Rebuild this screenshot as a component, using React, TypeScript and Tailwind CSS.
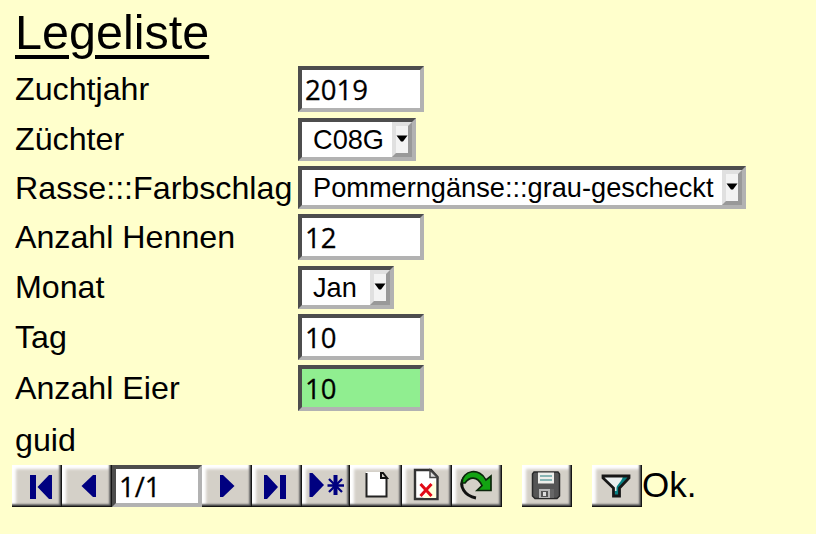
import type { ReactNode } from "react";

const sunken = "border-4 border-t-[#4d4d4d] border-l-[#4d4d4d] border-r-[#b2b2b2] border-b-[#b2b2b2]";
const digits = "font-['Open_Sans','Noto_Sans',sans-serif] text-[27.5px] leading-none [-webkit-text-stroke:0.3px_#000]";

function Row({ label, className, children }: { label: string; className: string; children?: ReactNode }) {
  return (
    <div className={`flex items-center ${className}`}>
      <div className="w-[283px] shrink-0 whitespace-nowrap text-[32.2px] leading-[40px]">{label}</div>
      {children}
    </div>
  );
}

function Field({ value, bg = "bg-white" }: { value: string; bg?: string }) {
  return (
    <div className={`flex h-[46px] w-[126px] items-center pl-[3px] pt-[2px] ${sunken} ${bg} ${digits}`}>{value}</div>
  );
}

function Select({ value, width }: { value: string; width: string }) {
  return (
    <div className={`flex h-[43px] bg-white ${sunken} ${width}`}>
      <div className="flex grow items-center whitespace-nowrap pl-[11px] pt-[1px] text-[27.2px] leading-none">{value}</div>
      <div className="flex w-5 shrink-0 justify-center border-4 border-t-[#e0e0e0] border-l-[#e0e0e0] border-r-[#999999] border-b-[#999999] bg-[#f3f3f3] pt-[9px]">
        <svg width="12" height="8" viewBox="0 0 12 8">
          <path d="M0.5 0.5h11L7 6.5H5z" fill="#000" />
        </svg>
      </div>
    </div>
  );
}

function Tool({ children, className = "w-[50px]" }: { children: ReactNode; className?: string }) {
  return (
    <div
      className={`flex h-[42px] shrink-0 items-center justify-center bg-[#d4d0c8] shadow-[inset_-1px_-1px_1px_#111,inset_-2px_-2px_2px_#444,inset_-3px_-3px_2px_#888,inset_4px_4px_3px_#fff] ${className}`}
    >
      <svg width="50" height="42" viewBox="0 0 50 42" className="shrink-0">
        {children}
      </svg>
    </div>
  );
}

export default function App() {
  return (
    <div className="h-[534px] w-[816px] overflow-hidden bg-[#ffffcc] pl-[15px] font-['Liberation_Sans',Arial,sans-serif] text-black">
      <h1 className="h-[66px] pt-[4px] text-[48.5px] leading-[56px] underline decoration-[4px] underline-offset-[6px]">Legeliste</h1>
      <Row label="Zuchtjahr" className="h-[46px]"><Field value="2019" /></Row>
      <Row label="Züchter" className="mt-[5px] h-[44px] [&>div:last-child]:mt-px"><Select value="C08G" width="w-[118px]" /></Row>
      <Row label="Rasse:::Farbschlag" className="mt-[5px] h-[43px]"><Select value="Pommerngänse:::grau-gescheckt" width="w-[448px]" /></Row>
      <Row label="Anzahl Hennen" className="mt-[5px] h-[46px]"><Field value="12" /></Row>
      <Row label="Monat" className="mt-[5px] h-[44px] [&>div:last-child]:mt-px"><Select value="Jan" width="w-[96px]" /></Row>
      <Row label="Tag" className="mt-[5px] h-[46px]"><Field value="10" /></Row>
      <Row label="Anzahl Eier" className="mt-[5px] h-[46px]"><Field value="10" bg="bg-[#90ee90]" /></Row>
      <Row label="guid" className="mt-[9px] h-[40px]" />

      <div className="-ml-[3px] mt-[5px] flex h-[42px] items-center">
        <Tool>
          <path d="M18 10h6v24h-6zM40 10v24h-3L25.500 22 37 10z" fill="#000080" />
        </Tool>
        <Tool>
          <path d="M34 10v22h-3L19.500 21 31 10z" fill="#000080" />
        </Tool>
        <div className={`flex h-[42px] w-[90px] shrink-0 items-center bg-white pl-[3px] pt-[2px] ${sunken} ${digits}`}>1/1</div>
        <Tool>
          <path d="M18 10h3l11.500 11L21 32h-3z" fill="#000080" />
        </Tool>
        <Tool>
          <path d="M12 10h3l11 12-11 12h-3zM28 10h6v24h-6z" fill="#000080" />
        </Tool>
        <Tool className="w-[48px]">
          <path d="M8.500 8h3l11.500 12-11.500 12h-3z" fill="#000080" />
          <path d="M34.500 10v20" stroke="#000080" strokeWidth="4" />
          <path d="M26.500 20.500h16.500M28 14l13 13M41 14L28 27" stroke="#000080" strokeWidth="2.300" />
        </Tool>
        <Tool className="w-[52px]">
          <path d="M15 7h15l6 6v18H15z" fill="#fff" />
          <path d="M15.500 8v23.500h20V13" fill="none" stroke="#222" strokeWidth="2" />
          <path d="M30 8h2l4 5h-6z" fill="#d4d0c8" stroke="#111" strokeWidth="2" />
        </Tool>
        <Tool>
          <path d="M13 5h16l6.500 7v22H13z" fill="#fff" stroke="#333" strokeWidth="2.400" />
          <path d="M33 15l1 8v10H21z" fill="#ffffdc" />
          <path d="M28 5v7.500h7.500z" fill="#ddd" stroke="#444" strokeWidth="1.500" />
          <path d="M18.500 19l11 12M29.500 19L18.500 31" stroke="#e20a16" strokeWidth="3" />
        </Tool>
        <Tool>
          <path d="M24 33C13 31 6 21 12 13" fill="none" stroke="#111" strokeWidth="3" />
          <path d="M10 18C10 5 28 2 34 15l5-4v14.500H25l5-5C25 10 17 12 13 18z" fill="#12a312" stroke="#0b260b" strokeWidth="1.700" />
        </Tool>
        <Tool className="ml-5 w-[50px]">
          <path d="M12 7h24l1.500 2v22L35 33.500H13l-2.500-2.500V9z" fill="#555" stroke="#292929" strokeWidth="1.500" />
          <path d="M16 7.500h16v11H16z" fill="#eeeeea" />
          <path d="M18 11h12M18 15h12" stroke="#67a3a2" strokeWidth="1.600" />
          <path d="M17 24h14v9H17z" fill="#b7b7b7" />
          <path d="M19 26h7v6h-7z" fill="#555" />
          <path d="M21 27h3v4h-3z" fill="#ddd" />
          <path d="M28 24h4v9h-4z" fill="#666" />
        </Tool>
        <Tool className="ml-5 w-[50px]">
          <path d="M11 11h26v2l-9.500 10v8h-6v-8L11 13z" fill="#e9eeee" />
          <path d="M31 11h6v2l-9.500 10v8h-5v-5h2v-3c0-3 6-7 6.500-12z" fill="#078083" />
          <path d="M11 11h26v2l-9.500 10v8h-6v-8L11 13z" fill="none" stroke="#171717" strokeWidth="2.800" />
        </Tool>
        <span className="pb-[2px] text-[35px] leading-[40px]">Ok.</span>
      </div>
    </div>
  );
}
